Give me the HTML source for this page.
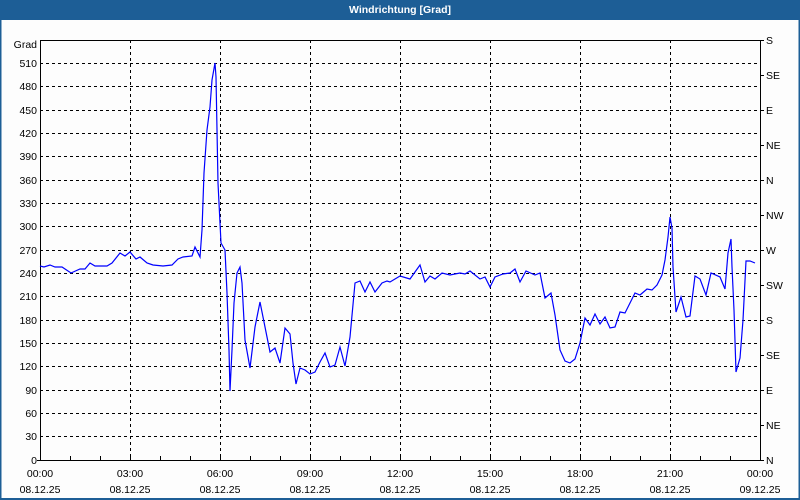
<!DOCTYPE html>
<html><head><meta charset="utf-8"><style>
html,body{margin:0;padding:0;background:#fff}
svg{display:block}
text{font-family:"Liberation Sans",sans-serif;font-size:10.5px;fill:#000}
</style></head><body>
<svg width="800" height="500" viewBox="0 0 800 500" xmlns="http://www.w3.org/2000/svg">
<rect width="800" height="500" fill="#fdfdfd"/>
<rect x="0" y="0" width="800" height="20" fill="#1d5e96"/>
<rect x="0" y="0" width="1.5" height="500" fill="#1d5e96"/>
<rect x="798.5" y="0" width="1.5" height="500" fill="#1d5e96"/>
<rect x="0" y="498" width="800" height="2" fill="#1d5e96"/>
<text x="400" y="13" text-anchor="middle" style="fill:#fff;font-weight:bold;font-size:10.5px">Windrichtung [Grad]</text>
<g stroke="#000" stroke-width="1" stroke-dasharray="3,3" fill="none">
<path d="M130.5 40V460M220.5 40V460M310.5 40V460M400.5 40V460M490.5 40V460M580.5 40V460M670.5 40V460"/>
<path d="M40 436.5H760M40 413.5H760M40 390.5H760M40 366.5H760M40 343.5H760M40 320.5H760M40 296.5H760M40 273.5H760M40 250.5H760M40 226.5H760M40 203.5H760M40 180.5H760M40 156.5H760M40 133.5H760M40 110.5H760M40 86.5H760M40 63.5H760"/>
</g>
<g stroke="#000" stroke-width="1" fill="none">
<path d="M40.5 40.5H760.5V460.5H40.5Z"/>
<path d="M70.5 456V460M100.5 456V460M130.5 456V460M160.5 456V460M190.5 456V460M220.5 456V460M250.5 456V460M280.5 456V460M310.5 456V460M340.5 456V460M370.5 456V460M400.5 456V460M430.5 456V460M460.5 456V460M490.5 456V460M520.5 456V460M550.5 456V460M580.5 456V460M610.5 456V460M640.5 456V460M670.5 456V460M700.5 456V460M730.5 456V460"/>
<path d="M760 40.5H764M760 75.5H764M760 110.5H764M760 145.5H764M760 180.5H764M760 215.5H764M760 250.5H764M760 285.5H764M760 320.5H764M760 355.5H764M760 390.5H764M760 425.5H764M760 460.5H764"/>
<path d="M37 460.5H40"/>
</g>
<polyline fill="none" stroke="#0000ff" stroke-width="1.2" points="40,266 44,267 50,265 55,267 62,267 71,273 80,269 85,269 90,263 95,266 107,266 112,263 120,253 125,256 130,252 136,259 140,257 147,263 153,265 163,266 172,265 178,259 183,257 192,256 195,247 200,257 202,230 204,173 207,130 210,107 212,80 215,63 216,77 218,183 220,223 221,243 225,250 227,293 229,350 230,391 232,350 234,303 237,273 240,267 242,283 245,340 250,368 255,327 260,302 265,327 270,352 275,348 280,363 285,328 290,334 293,363 296,384 300,368 305,370 310,374 315,372 320,362 325,353 330,367 335,365 340,347 345,366 350,337 355,283 360,281 365,292 370,282 375,292 382,283 387,281 390,282 400,276 410,279 420,265 425,282 430,276 435,279 442,273 450,275 460,273 465,274 470,271 480,279 485,277 490,287 495,277 503,274 510,273 515,269 520,282 526,271 535,275 540,273 545,298 551,293 555,315 560,350 565,361 570,363 575,359 580,343 585,318 590,325 595,314 600,324 605,317 610,328 615,327 620,312 625,313 630,303 635,293 640,295 647,289 652,290 657,285 662,275 665,260 668,237 670,217 672,228 673,267 676,312 681,297 686,317 690,316 695,276 700,279 706,295 711,273 720,277 725,289 728,253 731,239 732,267 734,310 736,372 740,358 743,320 746,261 750,261 755,263"/>
<g text-anchor="end">
<text x="37" y="48">Grad</text>
<text x="37" y="67">510</text><text x="37" y="90">480</text><text x="37" y="114">450</text><text x="37" y="137">420</text><text x="37" y="160">390</text><text x="37" y="184">360</text><text x="37" y="207">330</text><text x="37" y="230">300</text><text x="37" y="254">270</text><text x="37" y="277">240</text><text x="37" y="300">210</text><text x="37" y="324">180</text><text x="37" y="347">150</text><text x="37" y="370">120</text><text x="37" y="394">90</text><text x="37" y="417">60</text><text x="37" y="440">30</text><text x="37" y="464">0</text>
</g>
<g>
<text x="766" y="44">S</text><text x="766" y="79">SE</text><text x="766" y="114">E</text><text x="766" y="149">NE</text><text x="766" y="184">N</text><text x="766" y="219">NW</text><text x="766" y="254">W</text><text x="766" y="289">SW</text><text x="766" y="324">S</text><text x="766" y="359">SE</text><text x="766" y="394">E</text><text x="766" y="429">NE</text><text x="766" y="464">N</text>
</g>
<g text-anchor="middle">
<text x="40" y="477">00:00</text><text x="130" y="477">03:00</text><text x="220" y="477">06:00</text><text x="310" y="477">09:00</text><text x="400" y="477">12:00</text><text x="490" y="477">15:00</text><text x="580" y="477">18:00</text><text x="670" y="477">21:00</text><text x="760" y="477">00:00</text>
<text x="40" y="493">08.12.25</text><text x="130" y="493">08.12.25</text><text x="220" y="493">08.12.25</text><text x="310" y="493">08.12.25</text><text x="400" y="493">08.12.25</text><text x="490" y="493">08.12.25</text><text x="580" y="493">08.12.25</text><text x="670" y="493">08.12.25</text><text x="760" y="493">09.12.25</text>
</g>
</svg>
</body></html>
